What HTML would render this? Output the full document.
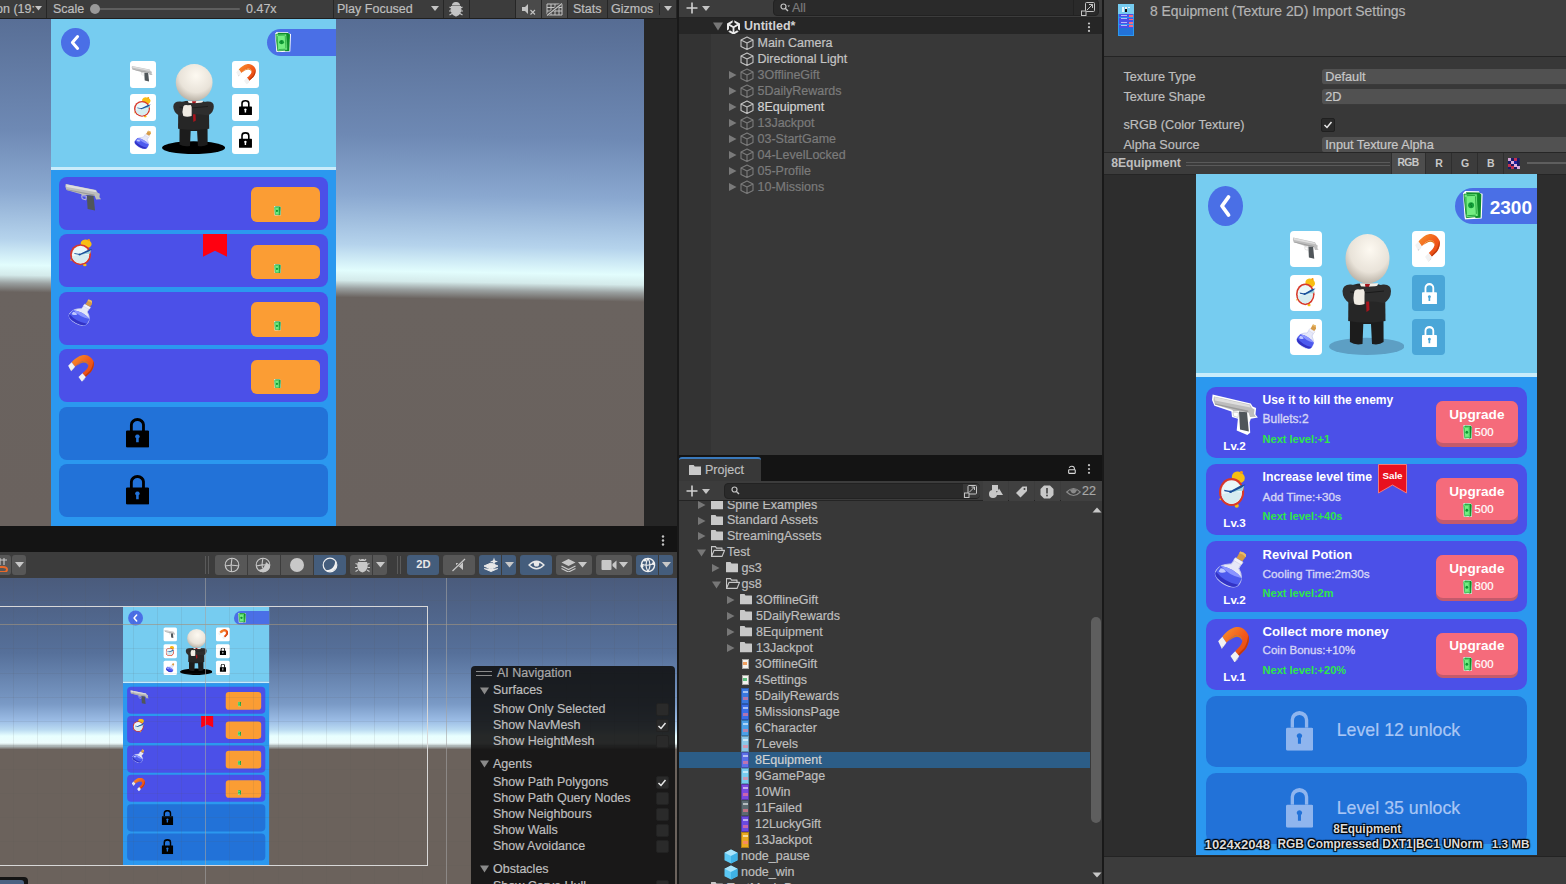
<!DOCTYPE html>
<html><head><meta charset="utf-8">
<style>
*{box-sizing:border-box}
html,body{margin:0;padding:0}
body{width:1566px;height:884px;overflow:hidden;position:relative;background:#191919;font-family:"Liberation Sans",sans-serif;color:#c4c4c4;font-size:12.5px}
.a{position:absolute}
.t{position:absolute;white-space:nowrap;line-height:1;-webkit-text-stroke:0.2px currentColor}
svg{display:block}
</style></head>
<body>
<svg width="0" height="0" style="position:absolute">
<defs>
<radialGradient id="hg" cx="0.55" cy="0.32" r="0.7"><stop offset="0" stop-color="#fdf9f1"/><stop offset="0.65" stop-color="#e9e3d9"/><stop offset="1" stop-color="#b8b0a4"/></radialGradient>
<linearGradient id="mg" x1="0" y1="0" x2="1" y2="1"><stop offset="0" stop-color="#f7962e"/><stop offset="0.55" stop-color="#f2581a"/><stop offset="1" stop-color="#e04810"/></linearGradient>
<symbol id="cash" viewBox="0 0 21 29.4" preserveAspectRatio="none">
  <path d="M2.2 0 L16.9 0.2 L17.3 2 L20.6 2.8 L19.7 28.1 L2.2 29.3 L1.6 27 L0 2.4 Z" fill="#fff"/>
  <path d="M3.1 1.2 L16.9 1.6 L19.3 3.7 L18.5 27.3 L13.2 27.7Z" fill="#0c8f2a"/>
  <path d="M1 3.3 L14.9 2.8 L16.1 26 L3.5 27.3 Z" fill="#74ee82" stroke="#0f8a2c" stroke-width="0.9"/>
  <path d="M3 6 L3.5 24 M13.2 5.5 L14 23.5 M4 4.8 L12.8 4.5 M4.5 25.3 L13.5 24.8" stroke="#13902f" stroke-width="0.8" fill="none"/>
  <circle cx="8.5" cy="14.7" r="3.1" fill="#12a03a"/>
  <path d="M9.5 13 Q8 12.3 7.6 13.6 Q8 14.6 9 15 Q9.6 16.3 8 16.4" fill="none" stroke="#0a6e22" stroke-width="0.7"/>
</symbol>
<symbol id="gun" viewBox="0 0 46 41" preserveAspectRatio="none">
  <path d="M0.6 0.6 L38.8 9.4 L40.6 12.5 L44.1 14.1 L43.5 20.6 L45.9 23.5 L38.8 24.7 L37.6 28.2 L38.2 38.8 L35.3 41 L24.7 36.5 L25.9 24.7 L20 22.9 L19.4 17.6 L2.4 11.8 L0 5.9 Z" style="fill:var(--go,#fff)"/>
  <path d="M2 2.5 L38 10.5 L40 14 L42.5 15.5 L42 20 L44 22.8 L38 23 L36.5 18.5 L27 17 L21 17.5 L20.5 16 L3 10.5 L1.5 6 Z" fill="#bdbdbd"/>
  <path d="M2.5 3 L37.5 11 L38.5 13.5 L3 6.5 Z" fill="#dedede"/>
  <path d="M3 9.5 L36 16.5 L36.5 18.5 L3 10.5Z" fill="#9a9a9a"/>
  <path d="M27 17.5 L35 18.2 L36.8 37.5 L28 35.5 Z" fill="#50565a"/>
  <path d="M21 18 L26.5 18.5 L26 23.5 L21.5 22 Z" fill="none" stroke="#d6d6d6" stroke-width="1"/>
</symbol>
<symbol id="clock" viewBox="0 0 27 37.4" preserveAspectRatio="none">
  <ellipse cx="19.3" cy="6.5" rx="6.6" ry="5.7" fill="#f8be12" transform="rotate(25 19.3 6.5)"/>
  <circle cx="22.4" cy="1.6" r="1.5" fill="#f59a10"/>
  <ellipse cx="17.7" cy="35.2" rx="2.1" ry="2" fill="#f8be12"/>
  <circle cx="1.3" cy="28.6" r="1" fill="#f8be12"/>
  <ellipse cx="12.6" cy="21.3" rx="12.6" ry="14.2" fill="#d8382a"/>
  <ellipse cx="12.6" cy="21.3" rx="10.4" ry="12" fill="#eaf7f9"/>
  <path d="M2.3 24 Q12 20 23 22 Q22 31 12.6 33.3 Q4 32 2.3 24Z" fill="#d6ecf0"/>
  <path d="M13 19.5 Q19 17 25 15 L24 20 Q19 20 14 21.5Z" fill="#9fd4dc"/>
  <path d="M5 19 L11.5 20.3 L22 14.5 L26.5 13.6 L22.5 17 L12.5 21.8 L5.5 20.5Z" fill="#1a4f9a"/>
  <circle cx="11.5" cy="21" r="1.3" fill="#1a4f9a"/>
</symbol>
<symbol id="potion" viewBox="0 0 29 38.3" preserveAspectRatio="none">
 <g transform="translate(14.8 24.3) rotate(32)">
  <path d="M-3.6 -14 L3.6 -14 L4 -8 Q12 -3.5 12.3 4 Q12.2 11.5 0 11.8 Q-12.2 11.5 -12.3 4 Q-12 -3.5 -4 -8 Z" fill="#e6e8f8" stroke="#c4c8ee" stroke-width="0.9"/>
  <path d="M-11.3 -1.5 Q0 -6 11.3 -1.5 Q12.2 3 12 6 Q11.8 11 0 11.2 Q-11.8 11 -12 6 Q-12.2 3 -11.3 -1.5Z" fill="#4d5aee"/>
  <path d="M-11.8 5.5 Q0 10 11.8 5.5 Q11 11 0 11.2 Q-11 11 -11.8 5.5Z" fill="#3232c4"/>
  <path d="M-11.3 -1.5 Q0 -6 11.3 -1.5 Q0 2.5 -11.3 -1.5Z" fill="#8a94ff"/>
  <path d="M-10 0.5 Q-7 -1 -4 1 Q-7 5 -10 4Z" fill="#c0c8ff"/>
  <rect x="-4.2" y="-15.5" width="8.4" height="3.4" rx="1" fill="#f2f2fa" stroke="#c8c8e0" stroke-width="0.5"/>
  <path d="M-3.1 -15.5 L3.1 -15.5 L3.5 -22.5 Q0 -24 -3.5 -22.5Z" fill="#d59a48"/>
  <path d="M-3.5 -22.5 Q0 -24 3.5 -22.5 L3.4 -20.5 Q0 -22 -3.4 -20.5Z" fill="#e8bb6a"/>
 </g>
</symbol>
<symbol id="magnet" viewBox="0 0 30.2 35.6" preserveAspectRatio="none">
  <path d="M4.2 9.7 C7 6 12 1 17.7 0 C23 -0.5 27.5 3 29.5 8 C31 13 29.5 18 26.5 22.5 L20.2 29.1 L16.7 24.2 C20 21 23 18 23.6 14.5 C24.2 10.5 21.5 7.8 18.5 8 C15.5 8.2 12 11.5 8.2 15.7 Z" fill="url(#mg)"/>
  <path d="M29.5 8 C31 13 29.5 18 26.5 22.5 L20.2 29.1 L19.2 27.7 L25.5 21 C28 17 29 12.5 29.5 8Z" fill="#c23a0c"/><path d="M18.5 8 C21.5 7.8 24.2 10.5 23.6 14.5 C23.3 12 21.5 9.8 18.5 9.8 C15.8 9.8 13 12.2 9.5 14.5 C12 11.5 15.5 8.2 18.5 8Z" fill="#e07818"/>
  <path d="M0.2 14.2 L4.2 9.7 L8.2 15.7 L3.7 21.7 Z" fill="#f2f2f2"/>
  <path d="M3.7 21.7 L8.2 15.7 L6.5 18.5 L3.5 20Z" fill="#c8c8c8"/>
  <path d="M12.2 29.1 L16.7 24.2 L20.7 29.1 L16.2 35.6 Z" fill="#f2f2f2"/>
  <path d="M16.2 35.6 L20.7 29.1 L19 32.5Z" fill="#c8c8c8"/>
</symbol>
<symbol id="lock" viewBox="0 0 27 40" preserveAspectRatio="none">
  <path fill-rule="evenodd" d="M4.6 17 L4.6 8.7 A8.7 8.7 0 0 1 22 8.7 L22 17 L18.7 17 L18.7 9.4 A5.4 5.3 0 0 0 7.9 9.4 L7.9 17 Z M1.5 16.8 L25.4 16.8 Q26.9 16.8 26.9 18.3 L26.9 38.4 Q26.9 39.9 25.4 39.9 L1.5 39.9 Q0 39.9 0 38.4 L0 18.3 Q0 16.8 1.5 16.8 Z M13.3 22.3 A2.7 2.7 0 0 0 11.8 27.2 L11.8 32.8 L14.8 32.8 L14.8 27.2 A2.7 2.7 0 0 0 13.3 22.3 Z"/>
</symbol>
<symbol id="guy" viewBox="0 0 75.5 121" preserveAspectRatio="none">
  <ellipse cx="37.75" cy="112.4" rx="37.75" ry="8.6" style="fill:currentColor"/>
  <path d="M21 86 L54.5 86 L54.6 108 Q50 111.5 43 110 L42 90 L34.3 90 L33.5 110 Q26 111.5 20.9 108Z" fill="#1c1c1c"/>
  <path d="M19.5 52 Q37 46 56.1 52 L56.5 87 Q37 90 19.2 87 Z" fill="#262626"/>
  <path d="M30.7 49.3 L49.3 49.3 L46 58 L34 58Z" fill="#f3efe8"/>
  <path d="M36 50 L41 50 L39.5 54 L40.5 76 L37.5 78 L36.5 54Z" fill="#a8141c"/>
  <path d="M13.5 57 Q14 50 22 50.5 Q38 55 54 50.5 Q62 50 62 57 Q62 65 55 69 Q38 66 21 69.5 Q13.5 65 13.5 57Z" fill="#2e2e2e"/>
  <path d="M21 58 Q38 60 55 57" fill="none" stroke="#1a1a1a" stroke-width="1"/>
  <path d="M25.5 57 Q27 54.5 31 55.5 L34.5 55 Q36.5 58 35.5 62 L35.5 70 Q30 72 25.5 70 Q23.5 64 25.5 57Z" fill="#f0ebe3"/>
  <ellipse cx="38.5" cy="24.7" rx="22" ry="24.7" fill="url(#hg)"/>
</symbol>
<symbol id="cube" viewBox="0 0 14 14">
  <path d="M7 1 L13 4 L13 10.5 L7 13.5 L1 10.5 L1 4 Z M1 4 L7 7 L13 4 M7 7 L7 13.5" fill="none" stroke="currentColor" stroke-width="1.1" stroke-linejoin="round"/>
</symbol>
<symbol id="folder" viewBox="0 0 12 10" preserveAspectRatio="none">
  <path d="M0 0.5 Q0 0 0.5 0 L4.5 0 L5.5 1.5 L11.5 1.5 Q12 1.5 12 2 L12 9.5 Q12 10 11.5 10 L0.5 10 Q0 10 0 9.5Z" fill="currentColor"/>
</symbol>
<symbol id="folderopen" viewBox="0 0 14 10" preserveAspectRatio="none">
  <path d="M0.5 9.5 L0.5 0.5 L4.5 0.5 L5.5 2 L11 2 L11 3.5 M0.5 9.5 L3 4 L13.5 4 L11 9.5 Z" fill="none" stroke="currentColor" stroke-width="1.1" stroke-linejoin="round"/>
</symbol>
</defs>
</svg>

<div class="a" id="game" style="left:0;top:0;width:677px;height:526px;overflow:hidden">
<div class="a" style="left:0px;top:19px;width:644px;height:507px;background:linear-gradient(180.9deg,#566c93 0px,#6e89b4 120px,#8aa8d0 180px,#b5d3ec 230px,#e2fdfd 256px,#d4eaea 266px,#9aa0a0 274px,#6a635f 283px,#6a625e 508px);"></div>
<div class="a" style="left:644px;top:19px;width:33px;height:507px;background:#262626;"></div>
<div class="a" style="left:51px;top:19px;width:285px;height:507px;overflow:hidden"><div class="a" style="left:0;top:0;width:285px;height:148px;background:#76ccf0"></div>
<div class="a" style="left:0;top:148px;width:285px;height:3px;background:#c9ecfb"></div>
<div class="a" style="left:0;top:151px;width:285px;height:356px;background:#2b98ef"></div>
<div class="a" style="left:9.8px;top:9px;width:29.2px;height:29.3px;border-radius:50%;background:#4a6fe6"></div>
<svg class="a" style="left:17px;top:15px" width="14" height="17" viewBox="0 0 14 17"><path d="M9.6 2.6 L4.4 8.5 L9.6 14.4" fill="none" stroke="#fff" stroke-width="3" stroke-linecap="round" stroke-linejoin="round"/></svg>
<div class="a" style="left:216px;top:10px;width:69px;height:27.3px;border-radius:13.6px 0 0 13.6px;background:#4a6fe6"></div>
<svg class="a" style="left:223.7px;top:13px" width="16.3" height="20.4"><use href="#cash"/></svg>
<div class="a" style="left:78.5px;top:41.8px;width:26.8px;height:27.2px;border-radius:3px;background:#fff"></div>
<div class="a" style="left:78.5px;top:75px;width:26.8px;height:27.2px;border-radius:3px;background:#fff"></div>
<div class="a" style="left:78.5px;top:107.4px;width:26.8px;height:27.2px;border-radius:3px;background:#fff"></div>
<div class="a" style="left:180.9px;top:41.8px;width:26.8px;height:27.2px;border-radius:3px;background:#fff"></div>
<div class="a" style="left:180.9px;top:75px;width:26.8px;height:27.2px;border-radius:3px;background:#fff"></div>
<div class="a" style="left:180.9px;top:107.4px;width:26.8px;height:27.2px;border-radius:3px;background:#fff"></div>
<svg class="a" style="left:80.2px;top:46.4px;--go:transparent;" width="22.6" height="18"><use href="#gun"/></svg>
<svg class="a" style="left:83px;top:78px;" width="17.2" height="20.7"><use href="#clock"/></svg>
<svg class="a" style="left:83px;top:109.7px;" width="17.2" height="20.3"><use href="#potion"/></svg>
<svg class="a" style="left:184.8px;top:45.2px;" width="19.8" height="20.4"><use href="#magnet"/></svg>
<svg class="a" style="left:188.2px;top:80.8px;fill:#000" width="13" height="15.3"><use href="#lock"/></svg>
<svg class="a" style="left:188.2px;top:113px;fill:#000" width="13" height="15.9"><use href="#lock"/></svg>
<svg class="a" style="left:110.9px;top:44.7px;color:#000" width="63.1" height="90.1"><use href="#guy"/></svg>
<div class="a" style="left:8px;top:158.0px;width:269.2px;height:52.8px;border-radius:8px;background:#4b50e8"></div>
<svg class="a" style="left:13.2px;top:163.4px;--go:transparent;" width="38.8" height="31.2"><use href="#gun"/></svg>
<div class="a" style="left:200px;top:168.4px;width:69.3px;height:34.7px;border-radius:6px;background:#fb9d34"></div>
<svg class="a" style="left:223.3px;top:187.2px;" width="7.3" height="9.8"><use href="#cash"/></svg>
<div class="a" style="left:8px;top:215.4px;width:269.2px;height:52.8px;border-radius:8px;background:#4b50e8"></div>
<svg class="a" style="left:18.9px;top:220.4px;" width="22.6" height="27.6"><use href="#clock"/></svg>
<div class="a" style="left:200px;top:225.8px;width:69.3px;height:34.7px;border-radius:6px;background:#fb9d34"></div>
<svg class="a" style="left:223.3px;top:244.6px;" width="7.3" height="9.8"><use href="#cash"/></svg>
<div class="a" style="left:8px;top:272.9px;width:269.2px;height:52.8px;border-radius:8px;background:#4b50e8"></div>
<svg class="a" style="left:16.6px;top:277.9px;" width="24.9" height="29.1"><use href="#potion"/></svg>
<div class="a" style="left:200px;top:283.3px;width:69.3px;height:34.7px;border-radius:6px;background:#fb9d34"></div>
<svg class="a" style="left:223.3px;top:302.1px;" width="7.3" height="9.8"><use href="#cash"/></svg>
<div class="a" style="left:8px;top:330.4px;width:269.2px;height:52.8px;border-radius:8px;background:#4b50e8"></div>
<svg class="a" style="left:17.4px;top:336.2px;" width="26" height="26.8"><use href="#magnet"/></svg>
<div class="a" style="left:200px;top:340.8px;width:69.3px;height:34.7px;border-radius:6px;background:#fb9d34"></div>
<svg class="a" style="left:223.3px;top:359.6px;" width="7.3" height="9.8"><use href="#cash"/></svg>
<div class="a" style="left:8px;top:387.8px;width:269.2px;height:52.8px;border-radius:8px;background:#2272d8"></div>
<svg class="a" style="left:74.8px;top:398.9px;fill:#000" width="23.2" height="29.7"><use href="#lock"/></svg>
<div class="a" style="left:8px;top:445.2px;width:269.2px;height:52.8px;border-radius:8px;background:#2272d8"></div>
<svg class="a" style="left:74.8px;top:456.4px;fill:#000" width="23.2" height="29.7"><use href="#lock"/></svg>
<svg class="a" style="left:152px;top:215.4px" width="24" height="23"><path d="M0 0 L24 0 L24 22.7 L12 16.7 L0 22.7Z" fill="#ff0010"/></svg></div>
<div class="a" style="left:0px;top:0px;width:677px;height:19px;background:#3c3c3c;border-bottom:1px solid #1f1f1f"></div>
<div class="t" style="left:-4px;top:2.8px;font-size:12.5px;color:#bebebe;font-weight:400;">on (19:</div>
<svg class="a" style="left:35px;top:6px" width="7" height="5" viewBox="0 0 7 5"><path d="M0 0 L7 0 L3.5 4.5Z" fill="#c4c4c4"/></svg>
<div class="a" style="left:46px;top:0px;width:1px;height:18px;background:#262626;"></div>
<div class="a" style="left:333px;top:0px;width:1px;height:18px;background:#262626;"></div>
<div class="a" style="left:443px;top:0px;width:1px;height:18px;background:#262626;"></div>
<div class="a" style="left:469px;top:0px;width:1px;height:18px;background:#262626;"></div>
<div class="a" style="left:515px;top:0px;width:1px;height:18px;background:#262626;"></div>
<div class="a" style="left:541px;top:0px;width:1px;height:18px;background:#262626;"></div>
<div class="a" style="left:567px;top:0px;width:1px;height:18px;background:#262626;"></div>
<div class="a" style="left:607px;top:0px;width:1px;height:18px;background:#262626;"></div>
<div class="a" style="left:676px;top:0px;width:1px;height:18px;background:#262626;"></div>
<div class="t" style="left:53px;top:2.8px;font-size:12.5px;color:#bebebe;font-weight:400;">Scale</div>
<div class="a" style="left:99px;top:8px;width:141px;height:2px;background:#5e5e5e;border-radius:1px"></div>
<div class="a" style="left:90px;top:4px;width:10px;height:10px;border-radius:50%;background:#999"></div>
<div class="t" style="left:246px;top:2.8px;font-size:12.5px;color:#bebebe;font-weight:400;">0.47x</div>
<div class="t" style="left:337px;top:2.8px;font-size:12.5px;color:#bebebe;font-weight:400;">Play Focused</div>
<svg class="a" style="left:431px;top:6px" width="8" height="5" viewBox="0 0 8 5"><path d="M0 0 L8 0 L4 5Z" fill="#c4c4c4"/></svg>
<svg class="a" style="left:449px;top:1px" width="14" height="16" viewBox="0 0 14 16"><path d="M7 1.5 C4 1.5 3.5 4 3.5 4 L10.5 4 C10.5 4 10 1.5 7 1.5Z M2.5 5.5 L11.5 5.5 C12.5 8 12 13 7 15 C2 13 1.5 8 2.5 5.5Z M0.5 6 L3 7.5 M13.5 6 L11 7.5 M0 10 L2.5 10 M14 10 L11.5 10 M0.5 14 L3 12.5 M13.5 14 L11 12.5" fill="#c4c4c4" stroke="#c4c4c4" stroke-width="1.2"/></svg>
<div class="a" style="left:516px;top:0px;width:25px;height:18px;background:#4a4a4a;"></div>
<div class="a" style="left:542px;top:0px;width:25px;height:18px;background:#4a4a4a;"></div>
<svg class="a" style="left:521px;top:3px" width="16" height="12" viewBox="0 0 16 12"><path d="M1 4 L4 4 L7 1 L7 11 L4 8 L1 8Z" fill="#c4c4c4"/><path d="M9.5 7 L14 11.5 M14 7 L9.5 11.5" stroke="#c4c4c4" stroke-width="1.1"/></svg>
<svg class="a" style="left:546px;top:3px" width="17" height="13" viewBox="0 0 17 13"><path d="M1 1 L16 1 L16 12 L1 12Z M1 4.5 L16 4.5 M1 8 L16 8 M5 1 L5 12 M9 1 L9 12 M13 1 L13 12" fill="none" stroke="#c4c4c4" stroke-width="1"/><path d="M0 13 L16 0" stroke="#4a4a4a" stroke-width="2.5"/><path d="M1 12.5 L16 0.5" stroke="#c4c4c4" stroke-width="1.1"/></svg>
<div class="t" style="left:573px;top:2.8px;font-size:12.5px;color:#bebebe;font-weight:400;">Stats</div>
<div class="t" style="left:611px;top:2.8px;font-size:12.5px;color:#bebebe;font-weight:400;">Gizmos</div>
<div class="a" style="left:659px;top:3px;width:1px;height:12px;background:#262626;"></div>
<svg class="a" style="left:664px;top:6px" width="8" height="5" viewBox="0 0 8 5"><path d="M0 0 L8 0 L4 5Z" fill="#c4c4c4"/></svg>
</div>
<div class="a" id="scene" style="left:0;top:526px;width:677px;height:358px;overflow:hidden">
<div class="a" style="left:0px;top:52px;width:677px;height:306px;background:linear-gradient(180deg,#4a5b7c 0px,#56709a 75px,#7a9ac6 126px,#9cbde6 143px,#bcdcf2 152px,#e8ffff 158px,#eefcfc 165px,#a8b0b0 168.5px,#6b625c 171.5px);"></div>
<div class="a" style="left:122.6px;top:79.6px;width:285px;height:507px;overflow:hidden;transform-origin:0 0;transform:scale(0.5137,0.5112)"><div class="a" style="left:0;top:0;width:285px;height:148px;background:#76ccf0"></div>
<div class="a" style="left:0;top:148px;width:285px;height:3px;background:#c9ecfb"></div>
<div class="a" style="left:0;top:151px;width:285px;height:356px;background:#2b98ef"></div>
<div class="a" style="left:9.8px;top:9px;width:29.2px;height:29.3px;border-radius:50%;background:#4a6fe6"></div>
<svg class="a" style="left:17px;top:15px" width="14" height="17" viewBox="0 0 14 17"><path d="M9.6 2.6 L4.4 8.5 L9.6 14.4" fill="none" stroke="#fff" stroke-width="3" stroke-linecap="round" stroke-linejoin="round"/></svg>
<div class="a" style="left:216px;top:10px;width:69px;height:27.3px;border-radius:13.6px 0 0 13.6px;background:#4a6fe6"></div>
<svg class="a" style="left:223.7px;top:13px" width="16.3" height="20.4"><use href="#cash"/></svg>
<div class="a" style="left:78.5px;top:41.8px;width:26.8px;height:27.2px;border-radius:3px;background:#fff"></div>
<div class="a" style="left:78.5px;top:75px;width:26.8px;height:27.2px;border-radius:3px;background:#fff"></div>
<div class="a" style="left:78.5px;top:107.4px;width:26.8px;height:27.2px;border-radius:3px;background:#fff"></div>
<div class="a" style="left:180.9px;top:41.8px;width:26.8px;height:27.2px;border-radius:3px;background:#fff"></div>
<div class="a" style="left:180.9px;top:75px;width:26.8px;height:27.2px;border-radius:3px;background:#fff"></div>
<div class="a" style="left:180.9px;top:107.4px;width:26.8px;height:27.2px;border-radius:3px;background:#fff"></div>
<svg class="a" style="left:80.2px;top:46.4px;--go:transparent;" width="22.6" height="18"><use href="#gun"/></svg>
<svg class="a" style="left:83px;top:78px;" width="17.2" height="20.7"><use href="#clock"/></svg>
<svg class="a" style="left:83px;top:109.7px;" width="17.2" height="20.3"><use href="#potion"/></svg>
<svg class="a" style="left:184.8px;top:45.2px;" width="19.8" height="20.4"><use href="#magnet"/></svg>
<svg class="a" style="left:188.2px;top:80.8px;fill:#000" width="13" height="15.3"><use href="#lock"/></svg>
<svg class="a" style="left:188.2px;top:113px;fill:#000" width="13" height="15.9"><use href="#lock"/></svg>
<svg class="a" style="left:110.9px;top:44.7px;color:#000" width="63.1" height="90.1"><use href="#guy"/></svg>
<div class="a" style="left:8px;top:158.0px;width:269.2px;height:52.8px;border-radius:8px;background:#4b50e8"></div>
<svg class="a" style="left:13.2px;top:163.4px;--go:transparent;" width="38.8" height="31.2"><use href="#gun"/></svg>
<div class="a" style="left:200px;top:168.4px;width:69.3px;height:34.7px;border-radius:6px;background:#fb9d34"></div>
<svg class="a" style="left:223.3px;top:187.2px;" width="7.3" height="9.8"><use href="#cash"/></svg>
<div class="a" style="left:8px;top:215.4px;width:269.2px;height:52.8px;border-radius:8px;background:#4b50e8"></div>
<svg class="a" style="left:18.9px;top:220.4px;" width="22.6" height="27.6"><use href="#clock"/></svg>
<div class="a" style="left:200px;top:225.8px;width:69.3px;height:34.7px;border-radius:6px;background:#fb9d34"></div>
<svg class="a" style="left:223.3px;top:244.6px;" width="7.3" height="9.8"><use href="#cash"/></svg>
<div class="a" style="left:8px;top:272.9px;width:269.2px;height:52.8px;border-radius:8px;background:#4b50e8"></div>
<svg class="a" style="left:16.6px;top:277.9px;" width="24.9" height="29.1"><use href="#potion"/></svg>
<div class="a" style="left:200px;top:283.3px;width:69.3px;height:34.7px;border-radius:6px;background:#fb9d34"></div>
<svg class="a" style="left:223.3px;top:302.1px;" width="7.3" height="9.8"><use href="#cash"/></svg>
<div class="a" style="left:8px;top:330.4px;width:269.2px;height:52.8px;border-radius:8px;background:#4b50e8"></div>
<svg class="a" style="left:17.4px;top:336.2px;" width="26" height="26.8"><use href="#magnet"/></svg>
<div class="a" style="left:200px;top:340.8px;width:69.3px;height:34.7px;border-radius:6px;background:#fb9d34"></div>
<svg class="a" style="left:223.3px;top:359.6px;" width="7.3" height="9.8"><use href="#cash"/></svg>
<div class="a" style="left:8px;top:387.8px;width:269.2px;height:52.8px;border-radius:8px;background:#2272d8"></div>
<svg class="a" style="left:74.8px;top:398.9px;fill:#000" width="23.2" height="29.7"><use href="#lock"/></svg>
<div class="a" style="left:8px;top:445.2px;width:269.2px;height:52.8px;border-radius:8px;background:#2272d8"></div>
<svg class="a" style="left:74.8px;top:456.4px;fill:#000" width="23.2" height="29.7"><use href="#lock"/></svg>
<svg class="a" style="left:152px;top:215.4px" width="24" height="23"><path d="M0 0 L24 0 L24 22.7 L12 16.7 L0 22.7Z" fill="#ff0010"/></svg></div>
<div class="a" style="left:12.8px;top:52px;width:1px;height:306px;background:rgba(90,90,90,0.1)"></div>
<div class="a" style="left:36.9px;top:52px;width:1px;height:306px;background:rgba(90,90,90,0.1)"></div>
<div class="a" style="left:60.9px;top:52px;width:1px;height:306px;background:rgba(90,90,90,0.1)"></div>
<div class="a" style="left:85.0px;top:52px;width:1px;height:306px;background:rgba(90,90,90,0.1)"></div>
<div class="a" style="left:109.1px;top:52px;width:1px;height:306px;background:rgba(90,90,90,0.1)"></div>
<div class="a" style="left:133.1px;top:52px;width:1px;height:306px;background:rgba(90,90,90,0.1)"></div>
<div class="a" style="left:157.2px;top:52px;width:1px;height:306px;background:rgba(90,90,90,0.1)"></div>
<div class="a" style="left:181.2px;top:52px;width:1px;height:306px;background:rgba(90,90,90,0.1)"></div>
<div class="a" style="left:205.3px;top:52px;width:1px;height:306px;background:rgba(90,90,90,0.1)"></div>
<div class="a" style="left:229.4px;top:52px;width:1px;height:306px;background:rgba(90,90,90,0.1)"></div>
<div class="a" style="left:253.4px;top:52px;width:1px;height:306px;background:rgba(90,90,90,0.1)"></div>
<div class="a" style="left:277.5px;top:52px;width:1px;height:306px;background:rgba(90,90,90,0.1)"></div>
<div class="a" style="left:301.5px;top:52px;width:1px;height:306px;background:rgba(90,90,90,0.1)"></div>
<div class="a" style="left:325.6px;top:52px;width:1px;height:306px;background:rgba(90,90,90,0.1)"></div>
<div class="a" style="left:349.7px;top:52px;width:1px;height:306px;background:rgba(90,90,90,0.1)"></div>
<div class="a" style="left:373.7px;top:52px;width:1px;height:306px;background:rgba(90,90,90,0.1)"></div>
<div class="a" style="left:397.8px;top:52px;width:1px;height:306px;background:rgba(90,90,90,0.1)"></div>
<div class="a" style="left:421.8px;top:52px;width:1px;height:306px;background:rgba(90,90,90,0.1)"></div>
<div class="a" style="left:445.9px;top:52px;width:1px;height:306px;background:rgba(90,90,90,0.1)"></div>
<div class="a" style="left:470.0px;top:52px;width:1px;height:306px;background:rgba(90,90,90,0.1)"></div>
<div class="a" style="left:494.0px;top:52px;width:1px;height:306px;background:rgba(90,90,90,0.1)"></div>
<div class="a" style="left:518.1px;top:52px;width:1px;height:306px;background:rgba(90,90,90,0.1)"></div>
<div class="a" style="left:542.1px;top:52px;width:1px;height:306px;background:rgba(90,90,90,0.1)"></div>
<div class="a" style="left:566.2px;top:52px;width:1px;height:306px;background:rgba(90,90,90,0.1)"></div>
<div class="a" style="left:590.3px;top:52px;width:1px;height:306px;background:rgba(90,90,90,0.1)"></div>
<div class="a" style="left:614.3px;top:52px;width:1px;height:306px;background:rgba(90,90,90,0.1)"></div>
<div class="a" style="left:638.4px;top:52px;width:1px;height:306px;background:rgba(90,90,90,0.1)"></div>
<div class="a" style="left:662.4px;top:52px;width:1px;height:306px;background:rgba(90,90,90,0.1)"></div>
<div class="a" style="left:0;top:74.2px;width:677px;height:1px;background:rgba(90,90,90,0.1)"></div>
<div class="a" style="left:0;top:98.3px;width:677px;height:1px;background:rgba(90,90,90,0.1)"></div>
<div class="a" style="left:0;top:122.4px;width:677px;height:1px;background:rgba(90,90,90,0.1)"></div>
<div class="a" style="left:0;top:146.5px;width:677px;height:1px;background:rgba(90,90,90,0.1)"></div>
<div class="a" style="left:0;top:170.6px;width:677px;height:1px;background:rgba(90,90,90,0.1)"></div>
<div class="a" style="left:0;top:194.7px;width:677px;height:1px;background:rgba(90,90,90,0.1)"></div>
<div class="a" style="left:0;top:218.8px;width:677px;height:1px;background:rgba(90,90,90,0.1)"></div>
<div class="a" style="left:0;top:242.9px;width:677px;height:1px;background:rgba(90,90,90,0.1)"></div>
<div class="a" style="left:0;top:267.0px;width:677px;height:1px;background:rgba(90,90,90,0.1)"></div>
<div class="a" style="left:0;top:291.1px;width:677px;height:1px;background:rgba(90,90,90,0.1)"></div>
<div class="a" style="left:0;top:315.2px;width:677px;height:1px;background:rgba(90,90,90,0.1)"></div>
<div class="a" style="left:0;top:339.3px;width:677px;height:1px;background:rgba(90,90,90,0.1)"></div>
<div class="a" style="left:205px;top:52px;width:1px;height:306px;background:rgba(170,170,170,0.55);"></div>
<div class="a" style="left:445.5px;top:52px;width:1px;height:306px;background:rgba(170,170,170,0.55);"></div>
<div class="a" style="left:0px;top:98px;width:677px;height:1px;background:rgba(165,150,130,0.6);"></div>
<div class="a" style="left:-10px;top:79.5px;width:438px;height:260px;border:1.5px solid #d8d8d8"></div>
<div class="a" style="left:471px;top:139.5px;width:204px;height:230px;background:rgba(17,17,17,0.9);border-radius:4px"></div>
<svg class="a" style="left:476px;top:144px" width="16" height="8" viewBox="0 0 16 8"><path d="M0 1.5 L16 1.5 M0 5.5 L16 5.5" stroke="#8a8a8a" stroke-width="1"/></svg>
<div class="t" style="left:497px;top:141.4px;font-size:12.5px;color:#a9a9a9;font-weight:400;">AI Navigation</div>
<svg class="a" style="left:479.5px;top:160.5px" width="9" height="8" viewBox="0 0 9 8"><path d="M0 0.5 L9 0.5 L4.5 7.5Z" fill="#8a8a8a"/></svg>
<div class="t" style="left:493px;top:158.2px;font-size:12.5px;color:#bebebe;font-weight:400;">Surfaces</div>
<div class="t" style="left:493px;top:177.2px;font-size:12.5px;color:#bebebe;font-weight:400;">Show Only Selected</div>
<div class="a" style="left:655.5px;top:176.9px;width:13px;height:13px;background:#2a2a2a;border:1px solid #222;border-radius:2px"></div>
<div class="t" style="left:493px;top:193.2px;font-size:12.5px;color:#bebebe;font-weight:400;">Show NavMesh</div>
<div class="a" style="left:655.5px;top:193.0px;width:13px;height:13px;background:#2a2a2a;border:1px solid #222;border-radius:2px"></div>
<svg class="a" style="left:657px;top:194.5px" width="10" height="10" viewBox="0 0 10 10"><path d="M1.5 5 L4 7.5 L8.5 2" fill="none" stroke="#e8e8e8" stroke-width="1.5"/></svg>
<div class="t" style="left:493px;top:209.3px;font-size:12.5px;color:#bebebe;font-weight:400;">Show HeightMesh</div>
<div class="a" style="left:655.5px;top:209.1px;width:13px;height:13px;background:#2a2a2a;border:1px solid #222;border-radius:2px"></div>
<svg class="a" style="left:479.5px;top:233.8px" width="9" height="8" viewBox="0 0 9 8"><path d="M0 0.5 L9 0.5 L4.5 7.5Z" fill="#8a8a8a"/></svg>
<div class="t" style="left:493px;top:231.6px;font-size:12.5px;color:#bebebe;font-weight:400;">Agents</div>
<div class="t" style="left:493px;top:250.2px;font-size:12.5px;color:#bebebe;font-weight:400;">Show Path Polygons</div>
<div class="a" style="left:655.5px;top:250.0px;width:13px;height:13px;background:#2a2a2a;border:1px solid #222;border-radius:2px"></div>
<svg class="a" style="left:657px;top:251.5px" width="10" height="10" viewBox="0 0 10 10"><path d="M1.5 5 L4 7.5 L8.5 2" fill="none" stroke="#e8e8e8" stroke-width="1.5"/></svg>
<div class="t" style="left:493px;top:266.4px;font-size:12.5px;color:#bebebe;font-weight:400;">Show Path Query Nodes</div>
<div class="a" style="left:655.5px;top:266.1px;width:13px;height:13px;background:#2a2a2a;border:1px solid #222;border-radius:2px"></div>
<div class="t" style="left:493px;top:282.4px;font-size:12.5px;color:#bebebe;font-weight:400;">Show Neighbours</div>
<div class="a" style="left:655.5px;top:282.1px;width:13px;height:13px;background:#2a2a2a;border:1px solid #222;border-radius:2px"></div>
<div class="t" style="left:493px;top:298.4px;font-size:12.5px;color:#bebebe;font-weight:400;">Show Walls</div>
<div class="a" style="left:655.5px;top:298.1px;width:13px;height:13px;background:#2a2a2a;border:1px solid #222;border-radius:2px"></div>
<div class="t" style="left:493px;top:314.4px;font-size:12.5px;color:#bebebe;font-weight:400;">Show Avoidance</div>
<div class="a" style="left:655.5px;top:314.1px;width:13px;height:13px;background:#2a2a2a;border:1px solid #222;border-radius:2px"></div>
<svg class="a" style="left:479.5px;top:338.8px" width="9" height="8" viewBox="0 0 9 8"><path d="M0 0.5 L9 0.5 L4.5 7.5Z" fill="#8a8a8a"/></svg>
<div class="t" style="left:493px;top:336.6px;font-size:12.5px;color:#bebebe;font-weight:400;">Obstacles</div>
<div class="t" style="left:493px;top:353.8px;font-size:12.5px;color:#bebebe;font-weight:400;">Show Carve Hull</div>
<div class="a" style="left:655.5px;top:353.5px;width:13px;height:13px;background:#2a2a2a;border:1px solid #222;border-radius:2px"></div>
<div class="a" style="left:-4px;top:351px;width:32px;height:12px;background:#141414;border-radius:4px"></div>
<div class="a" style="left:-2px;top:354px;width:26px;height:8px;background:#4b6282;border-radius:3px"></div>
<div class="a" style="left:0px;top:0px;width:677px;height:26px;background:#141414;"></div>
<svg class="a" style="left:661px;top:9px" width="4" height="12" viewBox="0 0 4 12"><circle cx="2" cy="1.5" r="1.2" fill="#c4c4c4"/><circle cx="2" cy="5.5" r="1.2" fill="#c4c4c4"/><circle cx="2" cy="9.5" r="1.2" fill="#c4c4c4"/></svg>
<div class="a" style="left:0px;top:26px;width:677px;height:26px;background:#3c3c3c;"></div>
<div class="a" style="left:-4px;top:29px;width:15.0px;height:20px;background:#575757;border-radius:3px"></div>
<div class="a" style="left:12px;top:29px;width:14.0px;height:20px;background:#575757;border-radius:3px"></div>
<div class="a" style="left:204.5px;top:30px;width:1px;height:18px;background:#5a5a5a;"></div>
<div class="a" style="left:207.5px;top:30px;width:1px;height:18px;background:#5a5a5a;"></div>
<div class="a" style="left:215px;top:29px;width:32.0px;height:20px;background:#575757;border-radius:3px 0 0 3px"></div>
<div class="a" style="left:248px;top:29px;width:32.0px;height:20px;background:#575757;border-radius:0"></div>
<div class="a" style="left:281px;top:29px;width:32.0px;height:20px;background:#575757;border-radius:0"></div>
<div class="a" style="left:314px;top:29px;width:32.0px;height:20px;background:#445d7c;border-radius:0 3px 3px 0"></div>
<div class="a" style="left:350px;top:29px;width:22.0px;height:20px;background:#575757;border-radius:3px 0 0 3px"></div>
<div class="a" style="left:373px;top:29px;width:14.0px;height:20px;background:#575757;border-radius:0 3px 3px 0"></div>
<div class="a" style="left:396.5px;top:30px;width:1px;height:18px;background:#5a5a5a;"></div>
<div class="a" style="left:399.5px;top:30px;width:1px;height:18px;background:#5a5a5a;"></div>
<div class="a" style="left:407px;top:29px;width:32.0px;height:20px;background:#445d7c;border-radius:3px"></div>
<div class="a" style="left:443px;top:29px;width:32.0px;height:20px;background:#575757;border-radius:3px"></div>
<div class="a" style="left:479px;top:29px;width:22.0px;height:20px;background:#445d7c;border-radius:3px 0 0 3px"></div>
<div class="a" style="left:502px;top:29px;width:14.0px;height:20px;background:#445d7c;border-radius:0 3px 3px 0"></div>
<div class="a" style="left:520px;top:29px;width:32.0px;height:20px;background:#445d7c;border-radius:3px"></div>
<div class="a" style="left:556px;top:29px;width:36.0px;height:20px;background:#575757;border-radius:3px"></div>
<div class="a" style="left:596px;top:29px;width:36.0px;height:20px;background:#575757;border-radius:3px"></div>
<div class="a" style="left:636px;top:29px;width:22.0px;height:20px;background:#445d7c;border-radius:3px 0 0 3px"></div>
<div class="a" style="left:659px;top:29px;width:14.0px;height:20px;background:#445d7c;border-radius:0 3px 3px 0"></div>
<svg class="a" style="left:-2px;top:32px" width="13" height="14" viewBox="0 0 13 14"><path d="M2 0 L2 7 M6 0 L6 7 M0 2 L9 2" stroke="#c8c8c8" stroke-width="1.1"/><path d="M0 9 L5 9 Q9 9 9 11.5 Q9 14 5 14 L0 14" fill="none" stroke="#e8692a" stroke-width="2"/><path d="M0 9 L2 9 M0 14 L2 14" stroke="#fff" stroke-width="2"/></svg>
<svg class="a" style="left:14.5px;top:36px" width="9" height="6" viewBox="0 0 9 6"><path d="M0 0 L9 0 L4.5 5.5Z" fill="#c8c8c8"/></svg>
<svg class="a" style="left:223.5px;top:31px" width="16" height="16" viewBox="0 0 16 16"><circle cx="8" cy="8" r="6.8" fill="none" stroke="#c8c8c8" stroke-width="1.1"/><path d="M1.2 9 Q8 7.5 14.8 9 M8 1.2 Q6.5 8 7.5 14.8" fill="none" stroke="#c8c8c8" stroke-width="1.1"/></svg>
<svg class="a" style="left:255px;top:31px" width="16" height="16" viewBox="0 0 16 16"><circle cx="8" cy="8" r="6.8" fill="none" stroke="#c8c8c8" stroke-width="1.1"/><path d="M14.8 8 A6.8 6.8 0 0 1 3 13 Q10 12 11 5Z" fill="#c8c8c8"/><path d="M1.2 9 Q8 7.5 11 8 M8 1.2 Q6.5 8 7.5 11" fill="none" stroke="#c8c8c8" stroke-width="1.1"/></svg>
<svg class="a" style="left:289px;top:31px" width="16" height="16" viewBox="0 0 16 16"><circle cx="8" cy="8" r="7" fill="#c8c8c8"/></svg>
<svg class="a" style="left:322px;top:31px" width="16" height="16" viewBox="0 0 16 16"><circle cx="8" cy="8" r="6.8" fill="none" stroke="#f0f0f0" stroke-width="1.2"/><path d="M12.8 3.2 A6.8 6.8 0 0 1 3.2 12.8 A8 8 0 0 0 12.8 3.2Z" fill="#f0f0f0"/></svg>
<svg class="a" style="left:354.5px;top:31px" width="15" height="16" viewBox="0 0 15 16"><path d="M7.5 2 C5 2 4.5 4 4.5 4 L10.5 4 C10.5 4 10 2 7.5 2Z M3 5 L12 5 C13.5 8 13 14 7.5 15.5 C2 14 1.5 8 3 5Z" fill="#c8c8c8"/><path d="M4 2 L5.5 4 M11 2 L9.5 4 M0.5 6.5 L3 7.5 M14.5 6.5 L12 7.5 M0 10.5 L2.5 10.5 M15 10.5 L12.5 10.5 M0.5 14.5 L3 13 M14.5 14.5 L12 13" stroke="#c8c8c8" stroke-width="1.2"/></svg>
<svg class="a" style="left:375.5px;top:36px" width="9" height="6" viewBox="0 0 9 6"><path d="M0 0 L9 0 L4.5 5.5Z" fill="#c8c8c8"/></svg>
<div class="t" style="left:416.2px;top:33.4px;font-size:11.2px;color:#e8e8e8;font-weight:700;-webkit-text-stroke:0;">2D</div>
<svg class="a" style="left:450px;top:31px" width="17" height="16" viewBox="0 0 17 16"><path d="M6 6 L9 6 L13 2.5 L13 13 L9 9.5 L6 9.5Z" fill="#c8c8c8"/><path d="M2 14 L15 1.5" stroke="#575757" stroke-width="2.6"/><path d="M2.5 14 L15 2" stroke="#c8c8c8" stroke-width="1.2"/></svg>
<svg class="a" style="left:483px;top:31px" width="16" height="16" viewBox="0 0 16 16"><path d="M1 9 L8 6 L15 9 L8 12Z M1 11.5 L8 14.5 L15 11.5" fill="#e8e8e8" stroke="#e8e8e8" stroke-width="1"/><path d="M11 0.5 L12 3.5 L15 4.5 L12 5.5 L11 8.5 L10 5.5 L7 4.5 L10 3.5Z" fill="#e8e8e8"/></svg>
<svg class="a" style="left:504.5px;top:36px" width="9" height="6" viewBox="0 0 9 6"><path d="M0 0 L9 0 L4.5 5.5Z" fill="#c8c8c8"/></svg>
<svg class="a" style="left:528px;top:33px" width="17" height="12" viewBox="0 0 17 12"><path d="M1 6 Q8.5 -1.5 16 6 Q8.5 13.5 1 6Z" fill="none" stroke="#e8e8e8" stroke-width="1.3"/><path d="M5.6 4.2 A3 3 0 0 0 11.4 4.2 A3 3 0 0 0 11.6 2.8 Q8.5 1.8 5.4 2.8 A3 3 0 0 0 5.6 4.2Z" fill="#e8e8e8"/><circle cx="8.5" cy="5" r="2.6" fill="#e8e8e8"/></svg>
<svg class="a" style="left:561px;top:32px" width="15" height="14" viewBox="0 0 15 14"><path d="M0.5 4.5 L7.5 1 L14.5 4.5 L7.5 8Z" fill="#c8c8c8"/><path d="M0.5 8 L7.5 11.5 L14.5 8 M0.5 10.5 L7.5 14 L14.5 10.5" fill="none" stroke="#c8c8c8" stroke-width="1.3"/></svg>
<svg class="a" style="left:578px;top:36px" width="9" height="6" viewBox="0 0 9 6"><path d="M0 0 L9 0 L4.5 5.5Z" fill="#c8c8c8"/></svg>
<svg class="a" style="left:601px;top:33px" width="16" height="12" viewBox="0 0 16 12"><rect x="0.5" y="1" width="10" height="10" rx="1" fill="#c8c8c8"/><path d="M11.5 5 L15.5 1.5 L15.5 10.5 L11.5 7Z" fill="#c8c8c8"/></svg>
<svg class="a" style="left:619px;top:36px" width="9" height="6" viewBox="0 0 9 6"><path d="M0 0 L9 0 L4.5 5.5Z" fill="#c8c8c8"/></svg>
<svg class="a" style="left:639.5px;top:31px" width="16" height="16" viewBox="0 0 16 16"><circle cx="8" cy="8" r="6.6" fill="none" stroke="#f0f0f0" stroke-width="1.4"/><path d="M1.5 7 Q8 10 14.5 6 M8 1.4 Q4 8 8 14.6 M8 1.4 Q12 8 8 14.6" fill="none" stroke="#f0f0f0" stroke-width="1.1"/><circle cx="5" cy="3" r="1.6" fill="#f0f0f0"/><circle cx="13.5" cy="6.5" r="1.6" fill="#f0f0f0"/><circle cx="2" cy="9" r="1.6" fill="#f0f0f0"/></svg>
<svg class="a" style="left:661.5px;top:36px" width="9" height="6" viewBox="0 0 9 6"><path d="M0 0 L9 0 L4.5 5.5Z" fill="#c8c8c8"/></svg>
</div>
<div class="a" style="left:677px;top:0px;width:2px;height:884px;background:#191919;"></div>
<div class="a" id="hier" style="left:679px;top:0;width:423px;height:455px;background:#383838;overflow:hidden">
<div class="a" style="left:0px;top:34px;width:32px;height:421px;background:#333333;"></div>
<div class="a" style="left:0px;top:0px;width:423px;height:18px;background:#3c3c3c;border-bottom:1px solid #242424"></div>
<svg class="a" style="left:7px;top:2px" width="12" height="12" viewBox="0 0 12 12"><path d="M6 0.5 L6 11.5 M0.5 6 L11.5 6" stroke="#d0d0d0" stroke-width="1.6"/></svg>
<svg class="a" style="left:23px;top:6px" width="8" height="5" viewBox="0 0 8 5"><path d="M0 0 L8 0 L4 5Z" fill="#c4c4c4"/></svg>
<div class="a" style="left:94px;top:-1px;width:326px;height:16.5px;background:#2a2a2a;border:1px solid #222;border-radius:4px"></div>
<svg class="a" style="left:101px;top:3px" width="10" height="9" viewBox="0 0 10 9"><circle cx="3.5" cy="3.5" r="2.5" fill="none" stroke="#c4c4c4" stroke-width="1.2"/><path d="M5.2 5.2 L8 8" stroke="#c4c4c4" stroke-width="1.4"/><path d="M7.5 2.5 L10 2.5 L8.75 4Z" fill="#c4c4c4"/></svg>
<div class="t" style="left:113px;top:2.2px;font-size:12.5px;color:#7a7a7a;font-weight:400;">All</div>
<div class="a" style="left:394px;top:0px;width:1px;height:15px;background:#222;"></div>
<svg class="a" style="left:402px;top:2px" width="14" height="14" viewBox="0 0 14 14"><rect x="4.5" y="0.5" width="9" height="9" rx="1" fill="none" stroke="#c4c4c4" stroke-width="1"/><rect x="0.5" y="9" width="4.5" height="4.5" fill="#2a2a2a" stroke="#c4c4c4" stroke-width="1"/><path d="M6 8 L11.5 2.5 M8 2.5 L11.5 2.5 L11.5 6" fill="none" stroke="#c4c4c4" stroke-width="1"/></svg>
<div class="a" style="left:0px;top:18px;width:423px;height:16px;background:#262626;"></div>
<svg class="a" style="left:33.5px;top:22px" width="10" height="9" viewBox="0 0 10 9"><path d="M0 0.5 L10 0.5 L5 8.5Z" fill="#777"/></svg>
<svg class="a" style="left:47.5px;top:19.5px" width="13" height="14.5" viewBox="0 0 13 14.5"><path d="M6.5 1 L12 4.2 L12 10.3 L6.5 13.5 L1 10.3 L1 4.2Z" fill="none" stroke="#ececec" stroke-width="2" stroke-linejoin="miter"/><path d="M6.5 7.2 L6.5 13 M6.5 7.2 L1.5 4.4 M6.5 7.2 L11.5 4.4" stroke="#ececec" stroke-width="1.8"/><path d="M6.5 -1 L6.5 5.2" stroke="#262626" stroke-width="1.7"/><path d="M-0.5 11.8 L2.4 10" stroke="#262626" stroke-width="1.6"/><path d="M13.5 11.8 L10.6 10" stroke="#262626" stroke-width="1.6"/></svg>
<div class="t" style="left:65px;top:20.4px;font-size:12.5px;color:#d2d2d2;font-weight:700;-webkit-text-stroke:0;">Untitled*</div>
<svg class="a" style="left:408px;top:22px" width="4" height="12" viewBox="0 0 4 12"><circle cx="2" cy="1.5" r="1.1" fill="#c4c4c4"/><circle cx="2" cy="5.2" r="1.1" fill="#c4c4c4"/><circle cx="2" cy="8.9" r="1.1" fill="#c4c4c4"/></svg>
<svg class="a" style="left:60.5px;top:36.3px;color:#c4c4c4" width="14" height="14" ><use href="#cube"/></svg>
<div class="t" style="left:78.5px;top:37.0px;font-size:12.5px;color:#c4c4c4;font-weight:400;">Main Camera</div>
<svg class="a" style="left:60.5px;top:52.3px;color:#c4c4c4" width="14" height="14" ><use href="#cube"/></svg>
<div class="t" style="left:78.5px;top:53.0px;font-size:12.5px;color:#c4c4c4;font-weight:400;">Directional Light</div>
<svg class="a" style="left:49.5px;top:71.3px" width="8" height="8" viewBox="0 0 8 8"><path d="M0 0 L7.5 4 L0 8Z" fill="#7a7a7a"/></svg>
<svg class="a" style="left:60.5px;top:68.3px;color:#7b7b7b" width="14" height="14" ><use href="#cube"/></svg>
<div class="t" style="left:78.5px;top:69.0px;font-size:12.5px;color:#7b7b7b;font-weight:400;">3OfflineGift</div>
<svg class="a" style="left:49.5px;top:87.3px" width="8" height="8" viewBox="0 0 8 8"><path d="M0 0 L7.5 4 L0 8Z" fill="#7a7a7a"/></svg>
<svg class="a" style="left:60.5px;top:84.3px;color:#7b7b7b" width="14" height="14" ><use href="#cube"/></svg>
<div class="t" style="left:78.5px;top:85.0px;font-size:12.5px;color:#7b7b7b;font-weight:400;">5DailyRewards</div>
<svg class="a" style="left:49.5px;top:103.3px" width="8" height="8" viewBox="0 0 8 8"><path d="M0 0 L7.5 4 L0 8Z" fill="#7a7a7a"/></svg>
<svg class="a" style="left:60.5px;top:100.3px;color:#c4c4c4" width="14" height="14" ><use href="#cube"/></svg>
<div class="t" style="left:78.5px;top:101.0px;font-size:12.5px;color:#d2d2d2;font-weight:400;">8Equipment</div>
<svg class="a" style="left:49.5px;top:119.3px" width="8" height="8" viewBox="0 0 8 8"><path d="M0 0 L7.5 4 L0 8Z" fill="#7a7a7a"/></svg>
<svg class="a" style="left:60.5px;top:116.3px;color:#7b7b7b" width="14" height="14" ><use href="#cube"/></svg>
<div class="t" style="left:78.5px;top:117.0px;font-size:12.5px;color:#7b7b7b;font-weight:400;">13Jackpot</div>
<svg class="a" style="left:49.5px;top:135.3px" width="8" height="8" viewBox="0 0 8 8"><path d="M0 0 L7.5 4 L0 8Z" fill="#7a7a7a"/></svg>
<svg class="a" style="left:60.5px;top:132.3px;color:#7b7b7b" width="14" height="14" ><use href="#cube"/></svg>
<div class="t" style="left:78.5px;top:133.1px;font-size:12.5px;color:#7b7b7b;font-weight:400;">03-StartGame</div>
<svg class="a" style="left:49.5px;top:151.3px" width="8" height="8" viewBox="0 0 8 8"><path d="M0 0 L7.5 4 L0 8Z" fill="#7a7a7a"/></svg>
<svg class="a" style="left:60.5px;top:148.3px;color:#7b7b7b" width="14" height="14" ><use href="#cube"/></svg>
<div class="t" style="left:78.5px;top:149.1px;font-size:12.5px;color:#7b7b7b;font-weight:400;">04-LevelLocked</div>
<svg class="a" style="left:49.5px;top:167.3px" width="8" height="8" viewBox="0 0 8 8"><path d="M0 0 L7.5 4 L0 8Z" fill="#7a7a7a"/></svg>
<svg class="a" style="left:60.5px;top:164.3px;color:#7b7b7b" width="14" height="14" ><use href="#cube"/></svg>
<div class="t" style="left:78.5px;top:165.1px;font-size:12.5px;color:#7b7b7b;font-weight:400;">05-Profile</div>
<svg class="a" style="left:49.5px;top:183.3px" width="8" height="8" viewBox="0 0 8 8"><path d="M0 0 L7.5 4 L0 8Z" fill="#7a7a7a"/></svg>
<svg class="a" style="left:60.5px;top:180.3px;color:#7b7b7b" width="14" height="14" ><use href="#cube"/></svg>
<div class="t" style="left:78.5px;top:181.1px;font-size:12.5px;color:#7b7b7b;font-weight:400;">10-Missions</div>
</div>
<div class="a" id="proj" style="left:679px;top:455px;width:423px;height:429px;background:#383838;overflow:hidden">
<div class="a" style="left:0px;top:296.70000000000005px;width:411px;height:16px;background:#2c5d87;"></div>
<svg class="a" style="left:18.8px;top:46.10000000000001px" width="8" height="8" viewBox="0 0 8 8"><path d="M0 0 L7.5 4 L0 8Z" fill="#777"/></svg>
<svg class="a" style="left:32.0px;top:44.10000000000001px;color:#c8c8c8" width="12" height="10.5" ><use href="#folder"/></svg>
<div class="t" style="left:48.0px;top:43.9px;font-size:12.5px;color:#bebebe;font-weight:400;">Spine Examples</div>
<svg class="a" style="left:18.8px;top:61.59999999999995px" width="8" height="8" viewBox="0 0 8 8"><path d="M0 0 L7.5 4 L0 8Z" fill="#777"/></svg>
<svg class="a" style="left:32.0px;top:59.59999999999995px;color:#c8c8c8" width="12" height="10.5" ><use href="#folder"/></svg>
<div class="t" style="left:48.0px;top:59.3px;font-size:12.5px;color:#bebebe;font-weight:400;">Standard Assets</div>
<svg class="a" style="left:18.8px;top:77.40000000000002px" width="8" height="8" viewBox="0 0 8 8"><path d="M0 0 L7.5 4 L0 8Z" fill="#777"/></svg>
<svg class="a" style="left:32.0px;top:75.40000000000002px;color:#c8c8c8" width="12" height="10.5" ><use href="#folder"/></svg>
<div class="t" style="left:48.0px;top:75.2px;font-size:12.5px;color:#bebebe;font-weight:400;">StreamingAssets</div>
<svg class="a" style="left:18.0px;top:94.3px" width="9" height="8" viewBox="0 0 9 8"><path d="M0 0.5 L9 0.5 L4.5 7.5Z" fill="#777"/></svg>
<svg class="a" style="left:32.0px;top:91.3px;color:#c8c8c8" width="14" height="11" ><use href="#folderopen"/></svg>
<div class="t" style="left:48.0px;top:91.0px;font-size:12.5px;color:#bebebe;font-weight:400;">Test</div>
<svg class="a" style="left:33.3px;top:109.3px" width="8" height="8" viewBox="0 0 8 8"><path d="M0 0 L7.5 4 L0 8Z" fill="#777"/></svg>
<svg class="a" style="left:46.5px;top:107.3px;color:#c8c8c8" width="12" height="10.5" ><use href="#folder"/></svg>
<div class="t" style="left:62.5px;top:107.0px;font-size:12.5px;color:#bebebe;font-weight:400;">gs3</div>
<svg class="a" style="left:32.5px;top:126.30000000000001px" width="9" height="8" viewBox="0 0 9 8"><path d="M0 0.5 L9 0.5 L4.5 7.5Z" fill="#777"/></svg>
<svg class="a" style="left:46.5px;top:123.30000000000001px;color:#c8c8c8" width="14" height="11" ><use href="#folderopen"/></svg>
<div class="t" style="left:62.5px;top:123.1px;font-size:12.5px;color:#bebebe;font-weight:400;">gs8</div>
<svg class="a" style="left:47.8px;top:141.3px" width="8" height="8" viewBox="0 0 8 8"><path d="M0 0 L7.5 4 L0 8Z" fill="#777"/></svg>
<svg class="a" style="left:61.0px;top:139.3px;color:#c8c8c8" width="12" height="10.5" ><use href="#folder"/></svg>
<div class="t" style="left:77.0px;top:139.1px;font-size:12.5px;color:#bebebe;font-weight:400;">3OfflineGift</div>
<svg class="a" style="left:47.8px;top:157.3px" width="8" height="8" viewBox="0 0 8 8"><path d="M0 0 L7.5 4 L0 8Z" fill="#777"/></svg>
<svg class="a" style="left:61.0px;top:155.3px;color:#c8c8c8" width="12" height="10.5" ><use href="#folder"/></svg>
<div class="t" style="left:77.0px;top:155.1px;font-size:12.5px;color:#bebebe;font-weight:400;">5DailyRewards</div>
<svg class="a" style="left:47.8px;top:173.3px" width="8" height="8" viewBox="0 0 8 8"><path d="M0 0 L7.5 4 L0 8Z" fill="#777"/></svg>
<svg class="a" style="left:61.0px;top:171.3px;color:#c8c8c8" width="12" height="10.5" ><use href="#folder"/></svg>
<div class="t" style="left:77.0px;top:171.1px;font-size:12.5px;color:#bebebe;font-weight:400;">8Equipment</div>
<svg class="a" style="left:47.8px;top:189.3px" width="8" height="8" viewBox="0 0 8 8"><path d="M0 0 L7.5 4 L0 8Z" fill="#777"/></svg>
<svg class="a" style="left:61.0px;top:187.3px;color:#c8c8c8" width="12" height="10.5" ><use href="#folder"/></svg>
<div class="t" style="left:77.0px;top:187.1px;font-size:12.5px;color:#bebebe;font-weight:400;">13Jackpot</div>
<div class="a" style="left:62.5px;top:203.8px;width:7px;height:10.5px;background:#f4f2ee;border:1px solid rgba(0,0,0,0.3)"></div>
<div class="a" style="left:64px;top:207.3px;width:4px;height:3px;background:#f0a060"></div>
<div class="t" style="left:76px;top:203.1px;font-size:12.5px;color:#bebebe;font-weight:400;">3OfflineGift</div>
<div class="a" style="left:62.5px;top:219.8px;width:7px;height:10.5px;background:#f4f2ee;border:1px solid rgba(0,0,0,0.3)"></div>
<div class="a" style="left:64px;top:223.3px;width:4px;height:3px;background:#60c080"></div>
<div class="t" style="left:76px;top:219.1px;font-size:12.5px;color:#bebebe;font-weight:400;">4Settings</div>
<div class="a" style="left:62px;top:233.3px;width:8px;height:16px;background:#3a78e0;border:1px solid rgba(0,0,0,0.25)"></div>
<div class="a" style="left:63.5px;top:236.3px;width:5px;height:2px;background:rgba(255,255,255,0.55)"></div>
<div class="a" style="left:63.5px;top:242.3px;width:5px;height:3px;background:rgba(255,120,140,0.6)"></div>
<div class="t" style="left:76px;top:235.1px;font-size:12.5px;color:#bebebe;font-weight:400;">5DailyRewards</div>
<div class="a" style="left:62px;top:249.3px;width:8px;height:16px;background:#3a6ee8;border:1px solid rgba(0,0,0,0.25)"></div>
<div class="a" style="left:63.5px;top:252.3px;width:5px;height:2px;background:rgba(255,255,255,0.55)"></div>
<div class="a" style="left:63.5px;top:258.3px;width:5px;height:3px;background:rgba(255,120,140,0.6)"></div>
<div class="t" style="left:76px;top:251.1px;font-size:12.5px;color:#bebebe;font-weight:400;">5MissionsPage</div>
<div class="a" style="left:62px;top:265.3px;width:8px;height:16px;background:#4aa0e8;border:1px solid rgba(0,0,0,0.25)"></div>
<div class="a" style="left:63.5px;top:268.3px;width:5px;height:2px;background:rgba(255,255,255,0.55)"></div>
<div class="a" style="left:63.5px;top:274.3px;width:5px;height:3px;background:rgba(255,120,140,0.6)"></div>
<div class="t" style="left:76px;top:267.1px;font-size:12.5px;color:#bebebe;font-weight:400;">6Character</div>
<div class="a" style="left:62px;top:281.3px;width:8px;height:16px;background:#8cc8e8;border:1px solid rgba(0,0,0,0.25)"></div>
<div class="a" style="left:63.5px;top:284.3px;width:5px;height:2px;background:rgba(255,255,255,0.55)"></div>
<div class="a" style="left:63.5px;top:290.3px;width:5px;height:3px;background:rgba(255,120,140,0.6)"></div>
<div class="t" style="left:76px;top:283.1px;font-size:12.5px;color:#bebebe;font-weight:400;">7Levels</div>
<div class="a" style="left:62px;top:297.3px;width:8px;height:16px;background:#5a6ee8;border:1px solid rgba(0,0,0,0.25)"></div>
<div class="a" style="left:63.5px;top:300.3px;width:5px;height:2px;background:rgba(255,255,255,0.55)"></div>
<div class="a" style="left:63.5px;top:306.3px;width:5px;height:3px;background:rgba(255,120,140,0.6)"></div>
<div class="t" style="left:76px;top:299.1px;font-size:12.5px;color:#d2d2d2;font-weight:400;">8Equipment</div>
<div class="a" style="left:62px;top:313.3px;width:8px;height:16px;background:#76ccf0;border:1px solid rgba(0,0,0,0.25)"></div>
<div class="a" style="left:63.5px;top:316.3px;width:5px;height:2px;background:rgba(255,255,255,0.55)"></div>
<div class="a" style="left:63.5px;top:322.3px;width:5px;height:3px;background:rgba(255,120,140,0.6)"></div>
<div class="t" style="left:76px;top:315.1px;font-size:12.5px;color:#bebebe;font-weight:400;">9GamePage</div>
<div class="a" style="left:62px;top:329.3px;width:8px;height:16px;background:#7a48e0;border:1px solid rgba(0,0,0,0.25)"></div>
<div class="a" style="left:63.5px;top:332.3px;width:5px;height:2px;background:rgba(255,255,255,0.55)"></div>
<div class="a" style="left:63.5px;top:338.3px;width:5px;height:3px;background:rgba(255,120,140,0.6)"></div>
<div class="t" style="left:76px;top:331.1px;font-size:12.5px;color:#bebebe;font-weight:400;">10Win</div>
<div class="a" style="left:62px;top:345.3px;width:8px;height:16px;background:#5c6a70;border:1px solid rgba(0,0,0,0.25)"></div>
<div class="a" style="left:63.5px;top:348.3px;width:5px;height:2px;background:rgba(255,255,255,0.55)"></div>
<div class="a" style="left:63.5px;top:354.3px;width:5px;height:3px;background:rgba(255,120,140,0.6)"></div>
<div class="t" style="left:76px;top:347.1px;font-size:12.5px;color:#bebebe;font-weight:400;">11Failed</div>
<div class="a" style="left:62px;top:361.3px;width:8px;height:16px;background:#6a4ae0;border:1px solid rgba(0,0,0,0.25)"></div>
<div class="a" style="left:63.5px;top:364.3px;width:5px;height:2px;background:rgba(255,255,255,0.55)"></div>
<div class="a" style="left:63.5px;top:370.3px;width:5px;height:3px;background:rgba(255,120,140,0.6)"></div>
<div class="t" style="left:76px;top:363.1px;font-size:12.5px;color:#bebebe;font-weight:400;">12LuckyGift</div>
<div class="a" style="left:62px;top:377.3px;width:8px;height:16px;background:#e8a820;border:1px solid rgba(0,0,0,0.25)"></div>
<div class="a" style="left:63.5px;top:380.3px;width:5px;height:2px;background:rgba(255,255,255,0.55)"></div>
<div class="a" style="left:63.5px;top:386.3px;width:5px;height:3px;background:rgba(255,120,140,0.6)"></div>
<div class="t" style="left:76px;top:379.1px;font-size:12.5px;color:#bebebe;font-weight:400;">13Jackpot</div>
<svg class="a" style="left:44.5px;top:394.3px" width="14" height="15" viewBox="0 0 14 15"><path d="M7 0.5 L13.5 3.8 L13.5 11.2 L7 14.5 L0.5 11.2 L0.5 3.8Z" fill="#5cc8f4"/><path d="M0.5 3.8 L7 7 L13.5 3.8 L7 0.5Z" fill="#a8e4fb"/><path d="M7 7 L7 14.5 L13.5 11.2 L13.5 3.8Z" fill="#3fb2e6"/></svg>
<div class="t" style="left:62px;top:395.1px;font-size:12.5px;color:#bebebe;font-weight:400;">node_pause</div>
<svg class="a" style="left:44.5px;top:410.3px" width="14" height="15" viewBox="0 0 14 15"><path d="M7 0.5 L13.5 3.8 L13.5 11.2 L7 14.5 L0.5 11.2 L0.5 3.8Z" fill="#5cc8f4"/><path d="M0.5 3.8 L7 7 L13.5 3.8 L7 0.5Z" fill="#a8e4fb"/><path d="M7 7 L7 14.5 L13.5 11.2 L13.5 3.8Z" fill="#3fb2e6"/></svg>
<div class="t" style="left:62px;top:411.1px;font-size:12.5px;color:#bebebe;font-weight:400;">node_win</div>
<svg class="a" style="left:18.8px;top:429.3px" width="8" height="8" viewBox="0 0 8 8"><path d="M0 0 L7.5 4 L0 8Z" fill="#777"/></svg>
<svg class="a" style="left:32.0px;top:427.3px;color:#c8c8c8" width="12" height="10.5" ><use href="#folder"/></svg>
<div class="t" style="left:48.0px;top:427.1px;font-size:12.5px;color:#bebebe;font-weight:400;">TextMesh Pro</div>
<div class="a" style="left:0px;top:0px;width:423px;height:26px;background:#141414;"></div>
<div class="a" style="left:0;top:2px;width:82px;height:24px;background:#383838;border-top:2px solid #3a79bb;border-radius:3px 3px 0 0"></div>
<svg class="a" style="left:9.5px;top:9.5px;color:#c8c8c8" width="12.5" height="10.5" ><use href="#folder"/></svg>
<div class="t" style="left:26px;top:8.8px;font-size:12.5px;color:#bebebe;font-weight:400;">Project</div>
<svg class="a" style="left:388px;top:8px" width="10" height="12" viewBox="0 0 10 12"><path d="M2.2 4.7 Q3 3.1 4.9 3.2 Q7.3 3.3 7.4 5.6 L7.4 6.8" fill="none" stroke="#d8d8d8" stroke-width="1.1"/><rect x="1.65" y="6.75" width="6.6" height="3.6" rx="0.5" fill="none" stroke="#d8d8d8" stroke-width="1.1"/></svg>
<svg class="a" style="left:408px;top:9px" width="4" height="12" viewBox="0 0 4 12"><circle cx="2" cy="1.2" r="1.1" fill="#c4c4c4"/><circle cx="2" cy="5" r="1.1" fill="#c4c4c4"/><circle cx="2" cy="8.8" r="1.1" fill="#c4c4c4"/></svg>
<div class="a" style="left:0px;top:26px;width:423px;height:20px;background:#3c3c3c;border-bottom:1px solid #242424"></div>
<svg class="a" style="left:7px;top:30px" width="12" height="12" viewBox="0 0 12 12"><path d="M6 0.5 L6 11.5 M0.5 6 L11.5 6" stroke="#d0d0d0" stroke-width="1.6"/></svg>
<svg class="a" style="left:23px;top:34px" width="8" height="5" viewBox="0 0 8 5"><path d="M0 0 L8 0 L4 5Z" fill="#c4c4c4"/></svg>
<div class="a" style="left:45px;top:28.3px;width:256px;height:15.5px;background:#2a2a2a;border:1px solid #222;border-radius:4px"></div>
<svg class="a" style="left:52px;top:31px" width="9" height="9" viewBox="0 0 9 9"><circle cx="3.5" cy="3.5" r="2.5" fill="none" stroke="#c4c4c4" stroke-width="1.2"/><path d="M5.2 5.2 L8 8" stroke="#c4c4c4" stroke-width="1.4"/></svg>
<div class="a" style="left:283.5px;top:29px;width:17px;height:14px;background:#383838;border-radius:0 4px 4px 0"></div>
<svg class="a" style="left:285px;top:29.5px" width="13" height="13" viewBox="0 0 13 13"><rect x="4" y="0.5" width="8.5" height="8.5" rx="1" fill="none" stroke="#c4c4c4" stroke-width="1"/><rect x="0.5" y="8" width="4.5" height="4.5" fill="#383838" stroke="#c4c4c4" stroke-width="1"/><path d="M5.5 7 L10.5 2 M7.5 2 L10.5 2 L10.5 5" fill="none" stroke="#c4c4c4" stroke-width="1"/></svg>
<div class="a" style="left:304px;top:26px;width:25px;height:20px;background:#404040;"></div>
<div class="a" style="left:330px;top:26px;width:25px;height:20px;background:#404040;"></div>
<div class="a" style="left:356px;top:26px;width:25px;height:20px;background:#404040;"></div>
<div class="a" style="left:382px;top:26px;width:41px;height:20px;background:#404040;"></div>
<svg class="a" style="left:309.5px;top:30px" width="15" height="13" viewBox="0 0 15 13"><rect x="3" y="0" width="6" height="6" fill="#c8c8c8"/><circle cx="4" cy="9" r="4" fill="#c8c8c8"/><path d="M10 3.5 L14 10 L6.5 10Z" fill="#c8c8c8"/></svg>
<svg class="a" style="left:336px;top:30px" width="13" height="13" viewBox="0 0 13 13"><path d="M1 8 L7.5 1.5 L12 1.5 L12 6 L5.5 12.5Z" fill="#c8c8c8"/><circle cx="9.5" cy="4" r="1" fill="#404040"/></svg>
<svg class="a" style="left:361px;top:29.5px" width="14" height="14" viewBox="0 0 14 14"><path d="M4 0.5 L10 0.5 L13.5 4 L13.5 10 L10 13.5 L4 13.5 L0.5 10 L0.5 4Z" fill="#c8c8c8"/><path d="M7 3 L7 8.5" stroke="#404040" stroke-width="1.6"/><circle cx="7" cy="10.5" r="0.9" fill="#404040"/></svg>
<svg class="a" style="left:387px;top:31.5px" width="15" height="10" viewBox="0 0 15 10"><path d="M0.7 5 Q7.5 -2 14.3 5 Q7.5 12 0.7 5Z" fill="none" stroke="#8a8a8a" stroke-width="1.1"/><path d="M4 3.3 Q7.5 0.5 11 3.3 Q9.5 6.5 7.5 6.5 Q5.5 6.5 4 3.3Z" fill="#8a8a8a"/></svg>
<div class="t" style="left:403px;top:30.0px;font-size:12.5px;color:#a8a8a8;font-weight:400;">22</div>
<div class="a" style="left:411px;top:46px;width:12px;height:383px;background:#383838;"></div>
<svg class="a" style="left:412.5px;top:52px" width="10" height="6" viewBox="0 0 10 6"><path d="M0.5 5.5 L9.5 5.5 L5 0.5Z" fill="#c8c8c8"/></svg>
<div class="a" style="left:412px;top:162px;width:9.5px;height:206px;background:#5e5e5e;border-radius:5px"></div>
<svg class="a" style="left:412.5px;top:416.5px" width="10" height="6" viewBox="0 0 10 6"><path d="M0.5 0.5 L9.5 0.5 L5 5.5Z" fill="#c8c8c8"/></svg>
</div>
<div class="a" style="left:1102px;top:0px;width:2px;height:884px;background:#191919;"></div>
<div class="a" id="insp" style="left:1104px;top:0;width:462px;height:884px;background:#383838;overflow:hidden">
<div class="a" style="left:0px;top:0px;width:462px;height:57px;background:#3e3e3e;border-bottom:1px solid #242424"></div>
<div class="a" style="left:13.9px;top:3.8px;width:16.3px;height:32.4px;background:#2b98ef;overflow:hidden"><div class="a" style="left:0;top:0;width:16.3px;height:9.8px;background:#76ccf0"></div><div class="a" style="left:7px;top:3px;width:2.4px;height:5.5px;background:linear-gradient(#eee 40%,#111 40%)"></div><div class="a" style="left:4px;top:3px;width:2px;height:5px;background:rgba(255,255,255,0.8)"></div><div class="a" style="left:10.5px;top:3px;width:2px;height:1.6px;background:rgba(255,255,255,0.8)"></div><div class="a" style="left:1px;top:10.2px;width:14.3px;height:3.2px;background:#4b50e8"></div><div class="a" style="left:11px;top:11.1px;width:4px;height:1.8px;background:#f56b7b"></div><div class="a" style="left:3.5px;top:10.799999999999999px;width:6px;height:0.8px;background:rgba(255,255,255,0.6)"></div><div class="a" style="left:1px;top:14.0px;width:14.3px;height:3.2px;background:#4b50e8"></div><div class="a" style="left:11px;top:14.9px;width:4px;height:1.8px;background:#f56b7b"></div><div class="a" style="left:3.5px;top:14.6px;width:6px;height:0.8px;background:rgba(255,255,255,0.6)"></div><div class="a" style="left:1px;top:17.4px;width:14.3px;height:3.2px;background:#4b50e8"></div><div class="a" style="left:11px;top:18.299999999999997px;width:4px;height:1.8px;background:#f56b7b"></div><div class="a" style="left:3.5px;top:18.0px;width:6px;height:0.8px;background:rgba(255,255,255,0.6)"></div><div class="a" style="left:1px;top:20.8px;width:14.3px;height:3.2px;background:#4b50e8"></div><div class="a" style="left:11px;top:21.7px;width:4px;height:1.8px;background:#f56b7b"></div><div class="a" style="left:3.5px;top:21.400000000000002px;width:6px;height:0.8px;background:rgba(255,255,255,0.6)"></div><div class="a" style="left:1px;top:24.7px;width:14.3px;height:3.2px;background:#2272d8"></div><div class="a" style="left:1px;top:28.5px;width:14.3px;height:3.2px;background:#2272d8"></div></div>
<div class="t" style="left:46px;top:4.5px;font-size:13.9px;color:#b4b4b4;font-weight:400;">8 Equipment (Texture 2D) Import Settings</div>
<div class="t" style="left:19.4px;top:71.1px;font-size:12.7px;color:#bebebe;font-weight:400;">Texture Type</div>
<div class="t" style="left:19.4px;top:91.0px;font-size:12.7px;color:#bebebe;font-weight:400;">Texture Shape</div>
<div class="t" style="left:19.4px;top:118.9px;font-size:12.7px;color:#bebebe;font-weight:400;">sRGB (Color Texture)</div>
<div class="t" style="left:19.4px;top:138.8px;font-size:12.7px;color:#bebebe;font-weight:400;">Alpha Source</div>
<div class="a" style="left:217.7px;top:69px;width:260px;height:16.0px;background:#515151;border-radius:3px;border-bottom:1px solid #3a3a3a"></div>
<div class="t" style="left:221.3px;top:71.0px;font-size:12.7px;color:#c8c8c8;font-weight:400;">Default</div>
<div class="a" style="left:217.7px;top:89.3px;width:260px;height:15.7px;background:#515151;border-radius:3px;border-bottom:1px solid #3a3a3a"></div>
<div class="t" style="left:221.3px;top:91.1px;font-size:12.7px;color:#c8c8c8;font-weight:400;">2D</div>
<div class="a" style="left:217.7px;top:137.2px;width:260px;height:16.0px;background:#515151;border-radius:3px;border-bottom:1px solid #3a3a3a"></div>
<div class="t" style="left:221.3px;top:139.2px;font-size:12.7px;color:#c8c8c8;font-weight:400;">Input Texture Alpha</div>
<div class="a" style="left:217.3px;top:118px;width:13.6px;height:13.6px;background:#2a2a2a;border:1px solid #202020;border-radius:2px"></div>
<svg class="a" style="left:219px;top:120px" width="10" height="10" viewBox="0 0 10 10"><path d="M1.5 5 L4 7.5 L8.5 2" fill="none" stroke="#e8e8e8" stroke-width="1.5"/></svg>
<div class="a" style="left:0px;top:152px;width:462px;height:21.5px;background:#3c3c3c;border-top:1px solid #262626"></div>
<div class="t" style="left:7.2px;top:156.9px;font-size:12.2px;color:#bebebe;font-weight:700;-webkit-text-stroke:0;">8Equipment</div>
<div class="a" style="left:82px;top:161.5px;width:204px;height:1px;background:#5a5a5a;"></div>
<div class="a" style="left:82px;top:164.5px;width:204px;height:1px;background:#5a5a5a;"></div>
<div class="a" style="left:287.7px;top:153px;width:33.5px;height:20.5px;background:#4d4d4d;"></div>
<div class="a" style="left:287.2px;top:153px;width:1px;height:20.5px;background:#2e2e2e;"></div>
<div class="a" style="left:321.2px;top:153px;width:1px;height:20.5px;background:#2e2e2e;"></div>
<div class="a" style="left:347.2px;top:153px;width:1px;height:20.5px;background:#2e2e2e;"></div>
<div class="a" style="left:373.2px;top:153px;width:1px;height:20.5px;background:#2e2e2e;"></div>
<div class="a" style="left:399.2px;top:153px;width:1px;height:20.5px;background:#2e2e2e;"></div>
<div class="t" style="left:293.5px;top:158.2px;font-size:10.3px;color:#c8c8c8;font-weight:700;-webkit-text-stroke:0;letter-spacing:-0.6px">RGB</div>
<div class="t" style="left:331.2px;top:158.1px;font-size:10.5px;color:#c8c8c8;font-weight:700;-webkit-text-stroke:0;">R</div>
<div class="t" style="left:357px;top:158.1px;font-size:10.5px;color:#c8c8c8;font-weight:700;-webkit-text-stroke:0;">G</div>
<div class="t" style="left:383px;top:158.1px;font-size:10.5px;color:#c8c8c8;font-weight:700;-webkit-text-stroke:0;">B</div>
<svg class="a" style="left:404.3px;top:158.4px" width="11.6" height="11" viewBox="0 0 11.6 11"><rect width="11.6" height="11" fill="#1a1a6a"/><rect x="0" y="0" width="3" height="3" fill="#d8a8d8"/><rect x="6" y="0" width="3" height="3" fill="#c03050"/><rect x="3" y="3" width="3" height="3" fill="#e0b0e0"/><rect x="6" y="3" width="3" height="3" fill="#2020a0"/><rect x="0" y="6" width="3" height="3" fill="#c03050"/><rect x="6" y="6" width="3" height="3" fill="#e0b0e0"/><rect x="3" y="8" width="3" height="3" fill="#c03050"/><rect x="9" y="8" width="3" height="3" fill="#d8a8d8"/></svg>
<div class="a" style="left:423.4px;top:162.3px;width:40px;height:1.5px;background:#5e5e5e;"></div>
<div class="a" style="left:0px;top:173.5px;width:462px;height:682.5px;background:#2d2d2d;border-top:1px solid #252525"></div>
<div class="a" style="left:0px;top:856px;width:462px;height:28px;background:#3c3c3c;border-top:1px solid #232323"></div>
<div class="a" style="left:92px;top:174px;width:341px;height:681px;overflow:hidden"><div class="a" style="left:0px;top:0px;width:341px;height:199px;background:#76ccf0;"></div>\n<div class="a" style="left:0px;top:199px;width:341px;height:4px;background:#c9ecfb;"></div>\n<div class="a" style="left:0px;top:203px;width:341px;height:478px;background:#2b98ef;"></div>\n<div class="a" style="left:12px;top:12px;width:35px;height:40px;border-radius:50%;background:#4a6fe6"></div>\n<svg class="a" style="left:20px;top:19px" width="18" height="26" viewBox="0 0 18 26"><path d="M12.5 4 L6 13 L12.5 22" fill="none" stroke="#fff" stroke-width="3.8" stroke-linecap="round" stroke-linejoin="round"/></svg>\n<div class="a" style="left:258.6px;top:14px;width:110px;height:36px;border-radius:18px;background:#4a6fe6"></div>\n<svg class="a" style="left:267.4px;top:17.2px;" width="20" height="28.7" preserveAspectRatio="none"><use href="#cash"/></svg>\n<div class="t" style="left:293.7px;top:23.5px;font-size:19px;color:#fff;font-weight:700;-webkit-text-stroke:0;">2300</div>\n<div class="a" style="left:94.1px;top:56.5px;width:32.3px;height:36.3px;background:#fff;border-radius:4px"></div>\n<div class="a" style="left:94.1px;top:101px;width:32.3px;height:36.3px;background:#fff;border-radius:4px"></div>\n<div class="a" style="left:94.1px;top:144.9px;width:32.3px;height:36.3px;background:#fff;border-radius:4px"></div>\n<div class="a" style="left:216.3px;top:56.5px;width:32.3px;height:36.3px;background:#fff;border-radius:4px"></div>\n<div class="a" style="left:216.3px;top:101px;width:32.3px;height:36.3px;background:#4aa6d8;border-radius:4px"></div>\n<div class="a" style="left:216.3px;top:144.9px;width:32.3px;height:36.3px;background:#4aa6d8;border-radius:4px"></div>\n<svg class="a" style="left:95.6px;top:62px;" width="27.8" height="24.9" preserveAspectRatio="none"><use href="#gun"/></svg>\n<svg class="a" style="left:99.8px;top:104.3px;" width="19.9" height="28.6" preserveAspectRatio="none"><use href="#clock"/></svg>\n<svg class="a" style="left:99.8px;top:147.9px;" width="20.7" height="27.3" preserveAspectRatio="none"><use href="#potion"/></svg>\n<svg class="a" style="left:219.3px;top:60.2px;" width="24.9" height="27.9" preserveAspectRatio="none"><use href="#magnet"/></svg>\n<svg class="a" style="left:225.5px;top:108.5px;fill:#fff" width="15" height="21.9" preserveAspectRatio="none"><use href="#lock"/></svg>\n<svg class="a" style="left:225.5px;top:152.1px;fill:#fff" width="15" height="21.2" preserveAspectRatio="none"><use href="#lock"/></svg>\n<svg class="a" style="left:132.7px;top:60px;color:#5d9fc4" width="75.5" height="121" preserveAspectRatio="none"><use href="#guy"/></svg>\n<div class="a" style="left:10px;top:213.0px;width:321px;height:71px;background:#4b50e8;border-radius:10px"></div>\n<svg class="a" style="left:15.7px;top:220.0px;" width="46" height="41" preserveAspectRatio="none"><use href="#gun"/></svg>\n<div class="t" style="left:27.3px;top:265.7px;font-size:11.63px;color:#fff;font-weight:700;-webkit-text-stroke:0;">Lv.2</div>\n<div class="t" style="left:66.6px;top:220.2px;font-size:12.07px;color:#fff;font-weight:700;-webkit-text-stroke:0;">Use it to kill the enemy</div>\n<div class="t" style="left:66.6px;top:239.3px;font-size:12.0px;color:#d4d4f6;font-weight:400;-webkit-text-stroke:0.35px #d4d4f6">Bullets:2</div>\n<div class="t" style="left:66.6px;top:259.5px;font-size:11.0px;color:#2ee64a;font-weight:700;-webkit-text-stroke:0;">Next level:+1</div>\n<div class="a" style="left:240px;top:227.0px;width:82px;height:45.7px;background:#c45a6c;border-radius:7px"></div>\n<div class="a" style="left:240px;top:227.0px;width:82px;height:42.2px;background:#f56b7b;border-radius:7px"></div>\n<div class="t" style="left:253.3px;top:233.7px;font-size:13.6px;color:#fff;font-weight:700;-webkit-text-stroke:0;">Upgrade</div>\n<svg class="a" style="left:266.6px;top:251.4px;" width="9.5" height="14.4" preserveAspectRatio="none"><use href="#cash"/></svg>\n<div class="t" style="left:278.6px;top:252.8px;font-size:11.3px;color:#fff;font-weight:400;">500</div>\n<div class="a" style="left:10px;top:290.2px;width:321px;height:71px;background:#4b50e8;border-radius:10px"></div>\n<svg class="a" style="left:23px;top:296.7px;" width="27" height="37" preserveAspectRatio="none"><use href="#clock"/></svg>\n<div class="t" style="left:27.3px;top:342.9px;font-size:11.63px;color:#fff;font-weight:700;-webkit-text-stroke:0;">Lv.3</div>\n<div class="t" style="left:66.6px;top:297.2px;font-size:12.3px;color:#fff;font-weight:700;-webkit-text-stroke:0;">Increase level time</div>\n<div class="t" style="left:66.6px;top:316.6px;font-size:11.7px;color:#d4d4f6;font-weight:400;-webkit-text-stroke:0.35px #d4d4f6">Add Time:+30s</div>\n<div class="t" style="left:66.6px;top:336.7px;font-size:11.0px;color:#2ee64a;font-weight:700;-webkit-text-stroke:0;">Next level:+40s</div>\n<div class="a" style="left:240px;top:304.2px;width:82px;height:45.7px;background:#c45a6c;border-radius:7px"></div>\n<div class="a" style="left:240px;top:304.2px;width:82px;height:42.2px;background:#f56b7b;border-radius:7px"></div>\n<div class="t" style="left:253.3px;top:310.9px;font-size:13.6px;color:#fff;font-weight:700;-webkit-text-stroke:0;">Upgrade</div>\n<svg class="a" style="left:266.6px;top:328.6px;" width="9.5" height="14.4" preserveAspectRatio="none"><use href="#cash"/></svg>\n<div class="t" style="left:278.6px;top:330.1px;font-size:11.3px;color:#fff;font-weight:400;">500</div>\n<div class="a" style="left:10px;top:367.4px;width:321px;height:71px;background:#4b50e8;border-radius:10px"></div>\n<svg class="a" style="left:18px;top:374.4px;" width="32" height="40" preserveAspectRatio="none"><use href="#potion"/></svg>\n<div class="t" style="left:27.3px;top:420.1px;font-size:11.63px;color:#fff;font-weight:700;-webkit-text-stroke:0;">Lv.2</div>\n<div class="t" style="left:66.6px;top:374.1px;font-size:13.0px;color:#fff;font-weight:700;-webkit-text-stroke:0;">Revival Potion</div>\n<div class="t" style="left:66.6px;top:393.8px;font-size:11.76px;color:#d4d4f6;font-weight:400;-webkit-text-stroke:0.35px #d4d4f6">Cooling Time:2m30s</div>\n<div class="t" style="left:66.6px;top:413.9px;font-size:11.0px;color:#2ee64a;font-weight:700;-webkit-text-stroke:0;">Next level:2m</div>\n<div class="a" style="left:240px;top:381.4px;width:82px;height:45.7px;background:#c45a6c;border-radius:7px"></div>\n<div class="a" style="left:240px;top:381.4px;width:82px;height:42.2px;background:#f56b7b;border-radius:7px"></div>\n<div class="t" style="left:253.3px;top:388.1px;font-size:13.6px;color:#fff;font-weight:700;-webkit-text-stroke:0;">Upgrade</div>\n<svg class="a" style="left:266.6px;top:405.8px;" width="9.5" height="14.4" preserveAspectRatio="none"><use href="#cash"/></svg>\n<div class="t" style="left:278.6px;top:407.2px;font-size:11.3px;color:#fff;font-weight:400;">800</div>\n<div class="a" style="left:10px;top:444.6px;width:321px;height:71px;background:#4b50e8;border-radius:10px"></div>\n<svg class="a" style="left:21.5px;top:452.6px;" width="31" height="35.5" preserveAspectRatio="none"><use href="#magnet"/></svg>\n<div class="t" style="left:27.3px;top:497.3px;font-size:11.63px;color:#fff;font-weight:700;-webkit-text-stroke:0;">Lv.1</div>\n<div class="t" style="left:66.6px;top:451.2px;font-size:13.2px;color:#fff;font-weight:700;-webkit-text-stroke:0;">Collect more money</div>\n<div class="t" style="left:66.6px;top:471.1px;font-size:11.54px;color:#d4d4f6;font-weight:400;-webkit-text-stroke:0.35px #d4d4f6">Coin Bonus:+10%</div>\n<div class="t" style="left:66.6px;top:491.1px;font-size:11.0px;color:#2ee64a;font-weight:700;-webkit-text-stroke:0;">Next level:+20%</div>\n<div class="a" style="left:240px;top:458.6px;width:82px;height:45.7px;background:#c45a6c;border-radius:7px"></div>\n<div class="a" style="left:240px;top:458.6px;width:82px;height:42.2px;background:#f56b7b;border-radius:7px"></div>\n<div class="t" style="left:253.3px;top:465.3px;font-size:13.6px;color:#fff;font-weight:700;-webkit-text-stroke:0;">Upgrade</div>\n<svg class="a" style="left:266.6px;top:483.0px;" width="9.5" height="14.4" preserveAspectRatio="none"><use href="#cash"/></svg>\n<div class="t" style="left:278.6px;top:484.5px;font-size:11.3px;color:#fff;font-weight:400;">600</div>\n<div class="a" style="left:10px;top:521.8px;width:321px;height:71px;background:#2272d8;border-radius:10px"></div>\n<svg class="a" style="left:89.8px;top:536.8px;fill:#8fb5ee" width="27.3" height="39.8" preserveAspectRatio="none"><use href="#lock"/></svg>\n<div class="t" style="left:140.7px;top:548.4px;font-size:17.8px;color:#a9c6f5;font-weight:400;">Level 12 unlock</div>\n<div class="a" style="left:10px;top:599.0px;width:321px;height:71px;background:#2272d8;border-radius:10px"></div>\n<svg class="a" style="left:89.8px;top:614.0px;fill:#8fb5ee" width="27.3" height="39.8" preserveAspectRatio="none"><use href="#lock"/></svg>\n<div class="t" style="left:140.7px;top:625.6px;font-size:17.8px;color:#a9c6f5;font-weight:400;">Level 35 unlock</div>\n<svg class="a" style="left:182px;top:290.2px" width="29" height="30" viewBox="0 0 29 30"><path d="M0.5 0.5 L28.5 0.5 L28.5 29 L14.5 21 L0.5 29Z" fill="#e8101e" stroke="#f27a7a" stroke-width="1"/></svg>\n<div class="t" style="left:186.4px;top:296.6px;font-size:9.82px;color:#fff;font-weight:700;-webkit-text-stroke:0;">Sale</div></div>
<div class="t" style="left:229.3px;top:823.7px;font-size:11.88px;color:#dcdcdc;font-weight:700;-webkit-text-stroke:0;text-shadow:0 0 2px #000,1px 1px 1px #000,-1px -1px 1px #000,1px -1px 1px #000,-1px 1px 1px #000">8Equipment</div>
<div class="t" style="left:100.6px;top:837.9px;font-size:13.1px;color:#dcdcdc;font-weight:700;-webkit-text-stroke:0;text-shadow:0 0 2px #000,1px 1px 1px #000,-1px -1px 1px #000,1px -1px 1px #000,-1px 1px 1px #000">1024x2048</div>
<div class="t" style="left:173.4px;top:838.5px;font-size:11.88px;color:#dcdcdc;font-weight:700;-webkit-text-stroke:0;text-shadow:0 0 2px #000,1px 1px 1px #000,-1px -1px 1px #000,1px -1px 1px #000,-1px 1px 1px #000">RGB Compressed DXT1|BC1 UNorm</div>
<div class="t" style="left:387.8px;top:837.9px;font-size:11.7px;color:#dcdcdc;font-weight:700;-webkit-text-stroke:0;text-shadow:0 0 2px #000,1px 1px 1px #000,-1px -1px 1px #000,1px -1px 1px #000,-1px 1px 1px #000">1.3 MB</div>
</div>
</body></html>
